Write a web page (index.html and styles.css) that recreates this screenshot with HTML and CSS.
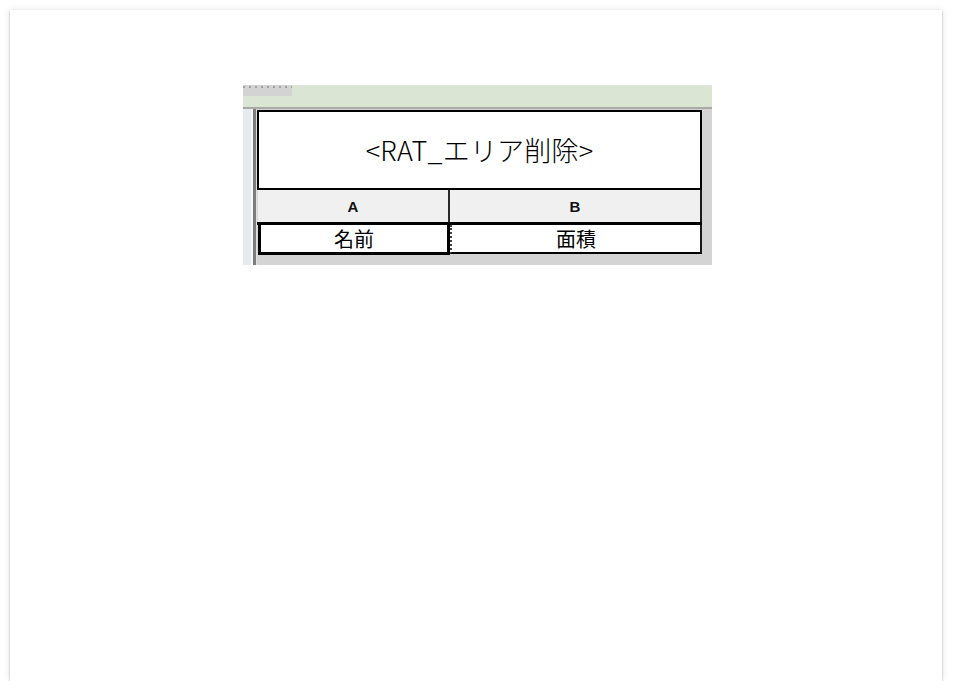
FILE: index.html
```html
<!DOCTYPE html>
<html lang="ja">
<head>
<meta charset="utf-8">
<title>RAT_エリア削除</title>
<link rel="stylesheet" href="styles.css">
</head>
<body>
<div class="card">
  <div class="shot">
    <div class="topbar"><div class="tab"></div></div>
    <div class="main">
      <div class="leftstrip">
        <span class="ls-blue"></span><span class="ls-white"></span><span class="ls-dark"></span><span class="ls-light"></span>
      </div>
      <div class="sheet">
        <div class="title">&lt;RAT_エリア削除&gt;</div>
        <div class="hrow">
          <div class="hcell hcell-a">A</div>
          <div class="hcell hcell-b">B</div>
        </div>
        <div class="drow">
          <div class="dcell dcell-a">名前</div>
          <div class="dcell dcell-b">面積</div>
        </div>
      </div>
    </div>
  </div>
</div>
</body>
</html>
```

FILE: styles.css
```css
html, body {
  margin: 0;
  padding: 0;
  background: #ffffff;
}
body {
  font-family: "Noto Sans CJK JP", "Noto Sans", sans-serif;
  padding: 10px 0 0 10px;
}
.card {
  width: 932px;
  height: 671px;
  background: #ffffff;
  box-shadow: 0 1px 2px rgba(0,0,0,0.28), 0 0 8px rgba(0,0,0,0.10);
  padding: 75px 0 0 233px;
  box-sizing: border-box;
}
.shot {
  width: 469px;
  height: 180px;
  display: flex;
  flex-direction: column;
}
.topbar {
  height: 22px;
  background: #dae5d3;
  border-bottom: 2px solid #a9aaa8;
  flex: none;
}
.tab {
  width: 49px;
  height: 11px;
  background-color: #d3d3d3;
  background-image: radial-gradient(circle, #a0a0a0 1px, transparent 1.5px);
  background-size: 6px 6px;
  background-position: 4px -1px;
  background-repeat: repeat-x;
}
.main {
  flex: 1;
  display: flex;
  background: #d4d4d4;
}
.leftstrip {
  width: 14px;
  display: flex;
  flex: none;
}
.ls-blue { width: 8px; background: #e6ebf1; }
.ls-white { width: 2px; background: #f7f7f7; }
.ls-dark { width: 3px; background: #7d7d7d; }
.ls-light { width: 1px; background: #e0e0e0; }
.sheet {
  width: 445px;
  padding-top: 1px;
  display: flex;
  flex-direction: column;
}
.title {
  height: 80px;
  box-sizing: border-box;
  border: 2px solid #000;
  background: #fff;
  display: flex;
  align-items: center;
  justify-content: center;
  font-size: 27px;
  font-weight: 300;
  color: #000;
  padding-bottom: 2px;
  letter-spacing: 0.2px;
}
.hrow {
  display: grid;
  grid-template-columns: 193px 252px;
  height: 32px;
  background: #f0f0f0;
  border-bottom: 3px solid #000;
}
.hcell {
  font-family: "Liberation Sans", Arial, sans-serif;
  font-weight: bold;
  font-size: 15px;
  display: flex;
  align-items: center;
  justify-content: center;
  color: #111;
  padding-top: 1px;
}
.hcell-a {
  border-right: 2px solid #2a2a2a;
  border-left: 1px solid #d8d8d8;
}
.hcell-b {
  border-right: 2px solid #1a1a1a;
}
.drow {
  display: grid;
  grid-template-columns: 193px 252px;
  height: 30px;
}
.dcell {
  background: #fff;
  font-size: 20px;
  display: flex;
  align-items: center;
  justify-content: center;
  color: #000;
  box-sizing: border-box;
  line-height: 1;
}
.dcell-a {
  border: 3px solid #000;
  border-top: none;
  margin-left: 1px;
}
.dcell-b {
  border-left: 2px dotted #444;
  border-right: 2px solid #1a1a1a;
  border-bottom: 2px solid #000;
  height: 29px;
}
```
